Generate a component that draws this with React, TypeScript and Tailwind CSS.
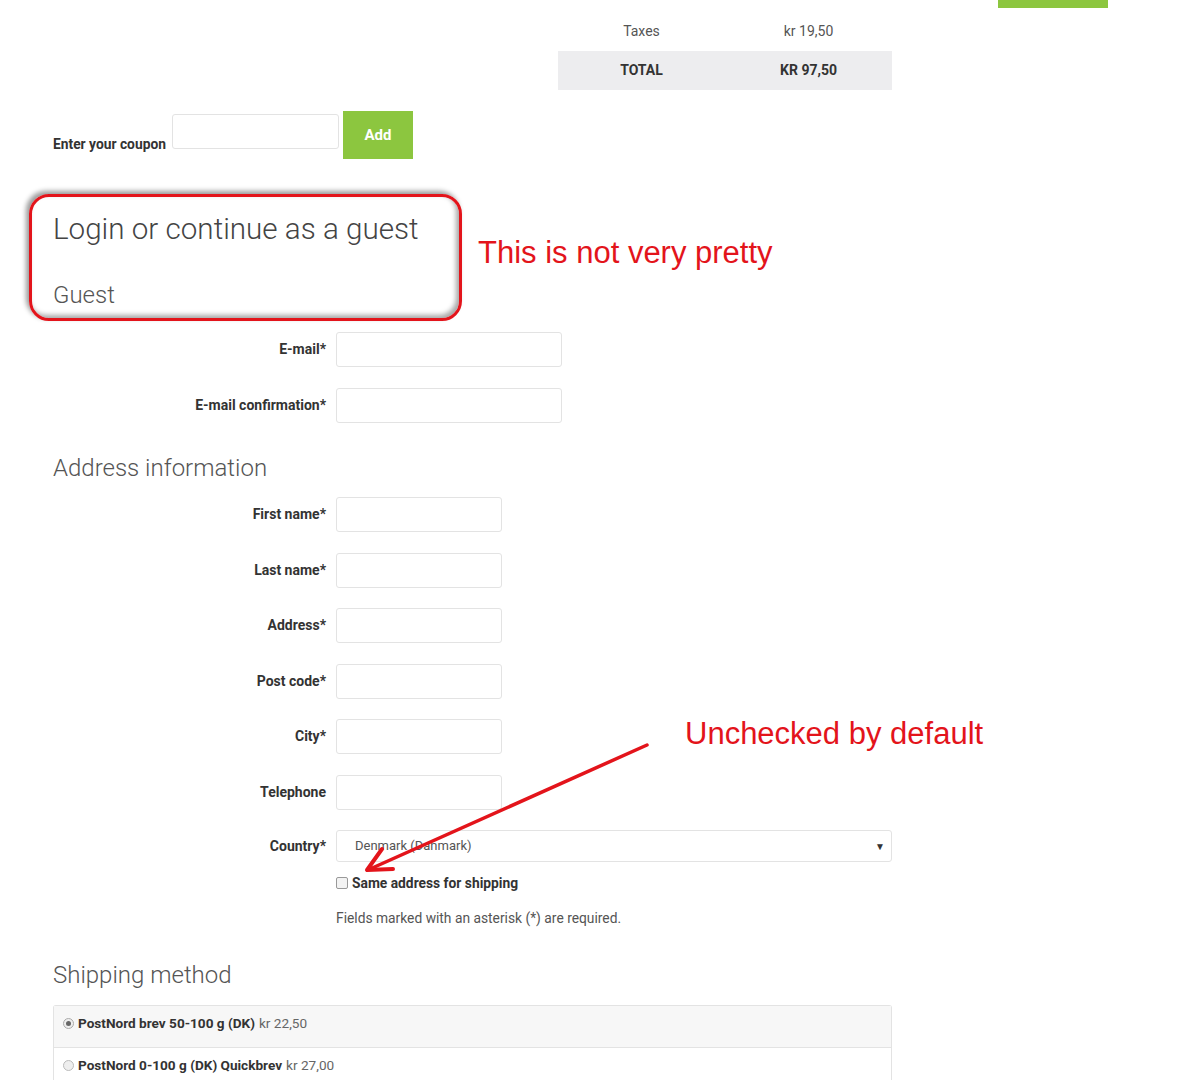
import React from 'react'

const inputCls = 'h-[35px] rounded-[3px] border border-[#e3e3e3] bg-white'

const Totals = () => {
  return (
    <div className="ml-auto w-[334px] pt-[12px] text-[14px]">
      <div className="flex h-[39px] items-center text-[#555]">
        <span className="w-1/2 text-center">Taxes</span>
        <span className="w-1/2 text-center">kr 19,50</span>
      </div>
      <div className="flex h-[39px] items-center bg-[#ededef] font-bold text-[#333]">
        <span className="w-1/2 text-center">TOTAL</span>
        <span className="w-1/2 text-center">KR 97,50</span>
      </div>
    </div>
  )
}

const Coupon = () => {
  return (
    <div className="mt-[21px] flex items-start">
      <label className="mt-[23px] text-[13.8px] font-bold leading-[20px] text-[#333]">Enter your coupon</label>
      <input className={`${inputCls} ml-[6px] mt-[3px] w-[167px]`} />
      <button className="ml-[4px] h-[48px] w-[70px] bg-[#8cc63f] text-[15px] font-bold text-white">Add</button>
    </div>
  )
}

const Row = ({ label, wide }: { label: string; wide?: boolean }) => {
  return (
    <>
      <label className="self-center text-right text-[14px] font-bold text-[#333]">{label}</label>
      <input className={`${inputCls} ${wide ? 'w-[226px]' : 'w-[166px]'}`} />
    </>
  )
}

const addressFields = ['First name*', 'Last name*', 'Address*', 'Post code*', 'City*', 'Telephone']

export default function App() {
  return (
    <div className="relative min-h-[1080px] overflow-hidden bg-white font-['Roboto',sans-serif] text-[#333]">
      <div className="flex">
        <main className="w-[892px] shrink-0 pl-[53px]">
          <Totals />
          <Coupon />

          <h2 className="mt-[52px] text-[29.6px] font-light leading-[36px] text-[#444]">Login or continue as a guest</h2>
          <h3 className="mt-[33px] text-[24px] font-light leading-[30px] text-[#555]">Guest</h3>

          <div className="mt-[22px] grid grid-cols-[273px_1fr] gap-x-[10px] gap-y-[21px]">
            <Row label="E-mail*" wide />
            <Row label="E-mail confirmation*" wide />
          </div>

          <h3 className="mt-[30px] text-[24px] font-light leading-[30px] text-[#555]">Address information</h3>

          <div className="mt-[14px] grid grid-cols-[273px_1fr] gap-x-[10px] gap-y-[20.5px]">
            {addressFields.map((f) => (
              <Row key={f} label={f} />
            ))}
            <label className="self-center text-right text-[14px] font-bold text-[#333]">Country*</label>
            <div className="flex h-[32px] items-center justify-between rounded-[3px] border border-[#e3e3e3] pl-[18px] pr-[6px] text-[13px] text-[#555]">
              <span>Denmark (Danmark)</span>
              <span className="text-[10px] text-[#333]">▼</span>
            </div>
          </div>

          <div className="ml-[283px]">
            <label className="mt-[12px] flex h-[18px] items-center gap-[4px] text-[13.8px] font-bold text-[#333]">
              <span className="h-[12px] w-[12px] rounded-[2px] border border-[#999] bg-[#f3f3f3]" />
              Same address for shipping
            </label>
            <p className="mt-[16px] text-[13.8px] leading-[20px] text-[#555]">Fields marked with an asterisk (*) are required.</p>
          </div>

          <h3 className="mt-[32px] text-[24px] font-light leading-[30px] text-[#555]">Shipping method</h3>

          <div className="mt-[15px] rounded-t-[3px] border border-b-0 border-[#e3e3e3] text-[13.6px]">
            <div className="flex h-[41px] items-start gap-[4px] bg-[#f7f7f7] pl-[9px] pt-[8px] leading-[18px]">
              <span className="mt-[4px] flex h-[11px] w-[11px] items-center justify-center rounded-full border border-[#aaa] bg-[#eee]">
                <span className="h-[5px] w-[5px] rounded-full bg-[#666]" />
              </span>
              <span className="font-bold text-[#333]">PostNord brev 50-100 g (DK)</span>
              <span className="text-[#666]">kr 22,50</span>
            </div>
            <div className="flex h-[41px] items-start gap-[4px] border-t border-[#e3e3e3] pl-[9px] pt-[8px] leading-[18px]">
              <span className="mt-[4px] h-[11px] w-[11px] rounded-full border border-[#bbb] bg-[#eee]" />
              <span className="font-bold text-[#333]">PostNord 0-100 g (DK) Quickbrev</span>
              <span className="text-[#666]">kr 27,00</span>
            </div>
          </div>
        </main>
        <aside className="ml-[106px]">
          <div className="h-[8px] w-[110px] bg-[#8cc63f]" />
        </aside>
      </div>

      {/* annotations drawn over the page */}
      <div className="pointer-events-none absolute left-[29px] top-[194px] h-[127px] w-[433px] rounded-[20px] border-[3px] border-[#e3141b] shadow-[-3px_-3px_5px_rgba(0,0,0,0.4),inset_-3px_-3px_5px_rgba(0,0,0,0.35)]" />
      <p className="absolute left-[478px] top-[235px] font-['Liberation_Sans',Arial,sans-serif] text-[31px] leading-[36px] text-[#e3141b]">This is not very pretty</p>
      <p className="absolute left-[685px] top-[716px] font-['Liberation_Sans',Arial,sans-serif] text-[31px] leading-[36px] text-[#e3141b]">Unchecked by default</p>
      <svg className="pointer-events-none absolute left-0 top-0" width="1181" height="1080">
        <line x1="647" y1="745" x2="370" y2="869" stroke="#e3141b" strokeWidth="3.5" strokeLinecap="round" />
        <polyline points="382,849 367,870 393,869" fill="none" stroke="#e3141b" strokeWidth="4" strokeLinecap="round" strokeLinejoin="round" />
      </svg>
    </div>
  )
}
